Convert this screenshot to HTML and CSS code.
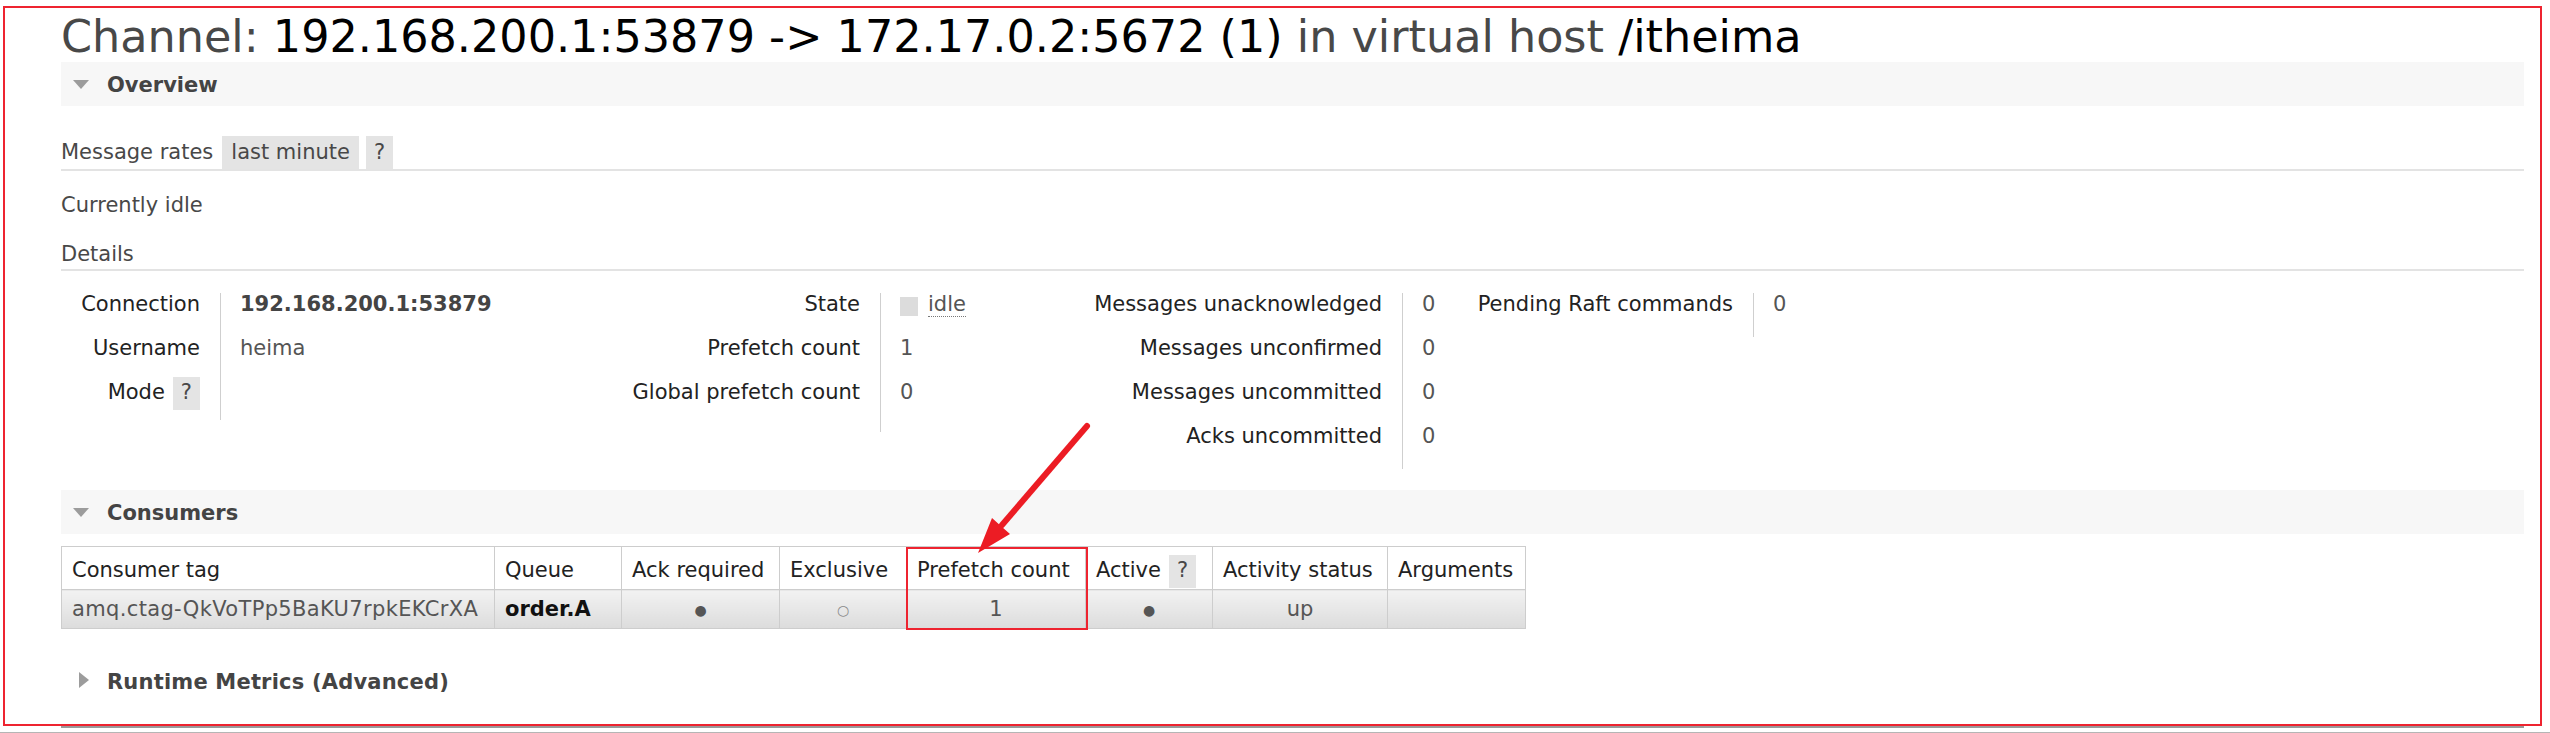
FILE: index.html
```html
<!DOCTYPE html>
<html lang="en">
<head>
<meta charset="utf-8">
<title>Channel: 192.168.200.1:53879 -&gt; 172.17.0.2:5672 (1)</title>
<link rel="stylesheet" href="styles.css">
</head>
<body>
<div class="frame">
  <h1 class="title"><span>Channel:</span> <span class="hl">192.168.200.1:53879 -&gt; 172.17.0.2:5672 (1)</span> <span>in virtual host</span> <span class="hl">/itheima</span></h1>

  <div class="bar"><span class="tri-down"></span>Overview</div>

  <div class="rates-row">
    <span class="rates-label">Message rates</span>
    <span class="pill">last minute</span>
    <span class="pill pill-q">?</span>
  </div>

  <div class="idle-note">Currently idle</div>
  <div class="details-head">Details</div>

  <div class="facts-area">
    <div class="facts facts--conn">
      <div class="facts-labels">
        <div class="fact-row">Connection</div>
        <div class="fact-row">Username</div>
        <div class="fact-row">Mode<span class="help">?</span></div>
      </div>
      <div class="facts-values">
        <div class="fact-row"><b class="strong-val">192.168.200.1:53879</b></div>
        <div class="fact-row">heima</div>
        <div class="fact-row"></div>
      </div>
    </div>
    <div class="facts facts--state">
      <div class="facts-labels">
        <div class="fact-row">State</div>
        <div class="fact-row">Prefetch count</div>
        <div class="fact-row">Global prefetch count</div>
      </div>
      <div class="facts-values">
        <div class="fact-row"><span class="state-box"></span><abbr class="state-text">idle</abbr></div>
        <div class="fact-row">1</div>
        <div class="fact-row">0</div>
      </div>
    </div>
    <div class="facts facts--msgs">
      <div class="facts-labels">
        <div class="fact-row">Messages unacknowledged</div>
        <div class="fact-row">Messages unconfirmed</div>
        <div class="fact-row">Messages uncommitted</div>
        <div class="fact-row">Acks uncommitted</div>
      </div>
      <div class="facts-values">
        <div class="fact-row">0</div>
        <div class="fact-row">0</div>
        <div class="fact-row">0</div>
        <div class="fact-row">0</div>
      </div>
    </div>
    <div class="facts facts--raft">
      <div class="facts-labels">
        <div class="fact-row">Pending Raft commands</div>
      </div>
      <div class="facts-values">
        <div class="fact-row">0</div>
      </div>
    </div>
  </div>

  <div class="bar bar--consumers"><span class="tri-down"></span>Consumers</div>

  <table class="consumers">
    <colgroup>
      <col class="c-tag"><col class="c-queue"><col class="c-ack"><col class="c-excl">
      <col class="c-prefetch"><col class="c-active"><col class="c-status"><col class="c-args">
    </colgroup>
    <thead>
      <tr>
        <th>Consumer tag</th>
        <th>Queue</th>
        <th>Ack required</th>
        <th>Exclusive</th>
        <th>Prefetch count</th>
        <th>Active<span class="help">?</span></th>
        <th>Activity status</th>
        <th>Arguments</th>
      </tr>
    </thead>
    <tbody>
      <tr>
        <td class="tag">amq.ctag-QkVoTPp5BaKU7rpkEKCrXA</td>
        <td><b class="queue-name">order.A</b></td>
        <td class="center"><span class="dot">&#9679;</span></td>
        <td class="center"><span class="ring">&#9675;</span></td>
        <td class="center">1</td>
        <td class="center"><span class="dot">&#9679;</span></td>
        <td class="center">up</td>
        <td></td>
      </tr>
    </tbody>
  </table>

  <div class="bar bar--plain"><span class="tri-right"></span>Runtime Metrics (Advanced)</div>

  <div class="annot-box"></div>
  <svg class="annot-arrow" width="135" height="150" viewBox="0 0 135 150">
    <line x1="127" y1="21" x2="42" y2="120" stroke="#ec1c24" stroke-width="6" stroke-linecap="round"/>
    <polygon points="18,148 50,129 42,122 32,113" fill="#ec1c24"/>
  </svg>
</div>
<div class="page-edge"></div>
<div class="page-foot"></div>
</body>
</html>
```

FILE: styles.css
```css
html, body {
  margin: 0;
  padding: 0;
  background: #fff;
}

body {
  font-family: "DejaVu Sans", Verdana, sans-serif;
  font-size: 21px;
  color: #484848;
}

.frame {
  position: relative;
  box-sizing: border-box;
  width: 2539px;
  height: 720px;
  margin: 6px 0 0 3px;
  border: 2px solid #ee2430;
  padding: 3px 16px 0 56px;
}

.title {
  margin: 0;
  font-size: 44.5px;
  line-height: 51px;
  font-weight: normal;
  color: #484848;
  white-space: nowrap;
}

.title .hl {
  color: #000;
}

.bar {
  box-sizing: border-box;
  height: 44px;
  padding-top: 3px;
  line-height: 41px;
  background: #f7f7f7;
  font-weight: bold;
  color: #444;
  white-space: nowrap;
}

.bar--consumers {
  margin-top: 21px;
}

.bar--plain {
  background: transparent;
  margin-top: 30px;
  letter-spacing: 0.2px;
}

.tri-down {
  display: inline-block;
  width: 0;
  height: 0;
  border-left: 8px solid transparent;
  border-right: 8px solid transparent;
  border-top: 9px solid #9c9c9c;
  margin: 0 18px 0 12px;
  vertical-align: 3px;
}

.tri-right {
  display: inline-block;
  width: 0;
  height: 0;
  border-top: 8px solid transparent;
  border-bottom: 8px solid transparent;
  border-left: 10px solid #9c9c9c;
  margin: 0 18px 0 18px;
  vertical-align: 1px;
}

.rates-row {
  display: flex;
  margin-top: 30px;
  border-bottom: 2px solid #e3e3e3;
}

.rates-row > span {
  line-height: 30px;
  padding-top: 1px;
  padding-bottom: 2px;
}

.rates-label {
  margin-right: 9px;
}

.pill {
  background: #e4e4e4;
  padding: 0 9px;
}

.pill-q {
  margin-left: 7px;
  padding: 0 8px;
}

.idle-note {
  margin-top: 19px;
  line-height: 30px;
}

.details-head {
  margin-top: 19px;
  line-height: 30px;
  border-bottom: 2px solid #e3e3e3;
}

.facts-area {
  display: flex;
  align-items: flex-start;
  margin-top: 22px;
}

.facts {
  display: flex;
}

.facts-labels {
  text-align: right;
  padding-right: 20px;
  color: #222;
}

.facts-values {
  border-left: 1px solid #cfcfcf;
  padding-left: 19px;
  color: #555;
}

.fact-row {
  height: 44px;
  line-height: 22px;
  white-space: nowrap;
}

.facts--conn .facts-labels { width: 139px; }
.facts--conn .facts-values { width: 300px; }
.facts--conn .fact-row:last-child { height: 39px; }

.facts--state .facts-labels { width: 320px; }
.facts--state .facts-values { width: 100px; padding-bottom: 7px; }

.facts--msgs .facts-labels { width: 382px; }
.facts--msgs .facts-values { width: 30px; }

.facts--raft .facts-labels { width: 281px; }
.facts--raft .facts-values { width: 50px; }

.strong-val {
  color: #444;
}

.help {
  display: inline-block;
  background: #e4e4e4;
  color: #484848;
  line-height: 30px;
  padding: 0 8px 3px;
  margin: -4px 0 -5px 8px;
}

.state-box {
  display: inline-block;
  width: 18px;
  height: 19px;
  background: #dcdcdc;
  margin-right: 10px;
  vertical-align: -5px;
}

.state-text {
  text-decoration: none;
  border-bottom: 1px dotted #777;
  color: #555;
}

.consumers {
  margin-top: 12px;
  border-collapse: collapse;
  table-layout: fixed;
  width: 1464px;
}

.c-tag { width: 433px; }
.c-queue { width: 127px; }
.c-ack { width: 158px; }
.c-excl { width: 127px; }
.c-prefetch { width: 179px; }
.c-active { width: 127px; }
.c-status { width: 175px; }
.c-args { width: 138px; }

.consumers th,
.consumers td {
  border: 1px solid #cdcdcd;
  padding: 10px 10px 6px;
  line-height: 26px;
  text-align: left;
  white-space: nowrap;
  overflow: hidden;
}

.consumers th {
  font-weight: normal;
  color: #222;
  background: #fff;
}

.consumers td {
  padding: 5px 10px;
  color: #555;
  background: linear-gradient(#f2f2f2, #dcdcdc);
}

.consumers td.tag {
  letter-spacing: 0.35px;
}

.consumers td.center {
  text-align: center;
}

.dot {
  font-size: 14px;
  color: #555;
}

.ring {
  font-size: 14px;
  color: #8a8a8a;
}

.queue-name {
  color: #111;
}

.annot-box {
  position: absolute;
  left: 901px;
  top: 539px;
  width: 182px;
  height: 83px;
  box-sizing: border-box;
  border: 2px solid #ee2430;
}

.annot-arrow {
  position: absolute;
  left: 955px;
  top: 397px;
}

.page-edge {
  margin-left: 61px;
  width: 2463px;
  height: 2px;
  background: #9a9a9a;
}

.page-foot {
  margin-top: 4px;
  height: 1px;
  background: #b5b5b5;
}
```
